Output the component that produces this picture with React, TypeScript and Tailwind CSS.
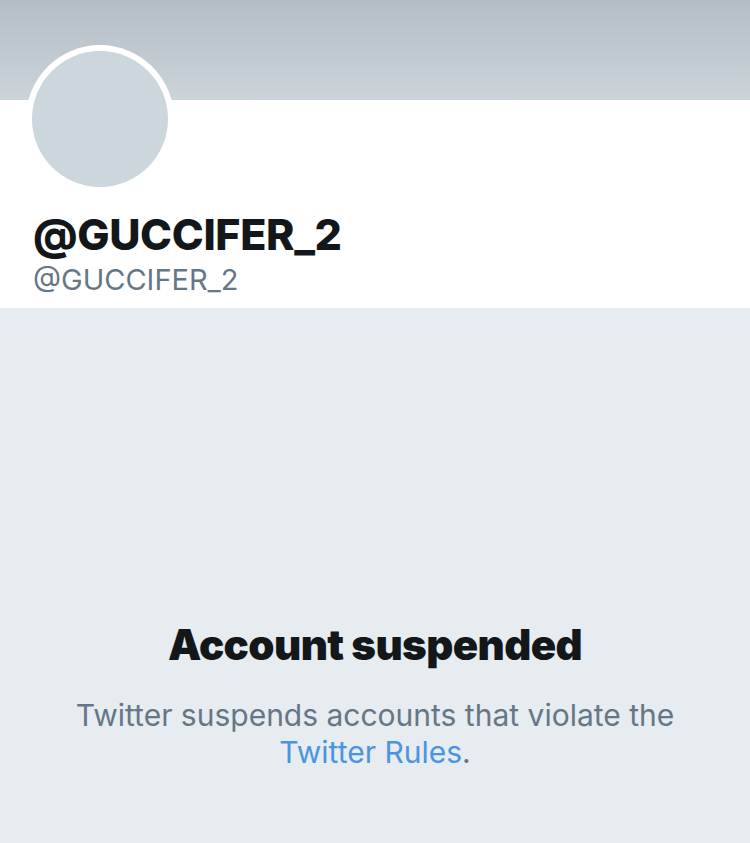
export default function App() {
  return (
    <div className="w-[750px] h-[843px] flex flex-col bg-[#e6ecf0] overflow-hidden" style={{ fontFamily: "Inter, 'Liberation Sans', sans-serif" }}>
      <div className="h-[100px] shrink-0 bg-gradient-to-b from-[#b4bdc5] to-[#ccd4da]" />
      <div className="h-[208px] shrink-0 bg-white relative px-[33px]">
        <div className="absolute left-[26px] top-[-55px] w-[148px] h-[148px] rounded-full bg-white p-[6px]">
          <div className="w-full h-full rounded-full bg-[#ccd6dd]" />
        </div>
        <div className="pt-[110px] text-[43px] leading-[48px] font-extrabold text-[#14171a] tracking-[-0.35px]">@GUCCIFER_2</div>
        <div className="text-[29px] leading-[36px] text-[#657786] mt-[4px]">@GUCCIFER_2</div>
      </div>
      <div className="flex flex-col items-center pt-[312px] text-center">
        <div className="text-[42px] leading-[50px] font-black text-[#14171a] tracking-[-0.6px]">Account suspended</div>
        <div className="mt-[27px] text-[30px] leading-[37px] text-[#657786] w-[640px]">
          Twitter suspends accounts that violate the <span className="text-[#4a95df]">Twitter Rules</span>.
        </div>
      </div>
    </div>
  );
}
